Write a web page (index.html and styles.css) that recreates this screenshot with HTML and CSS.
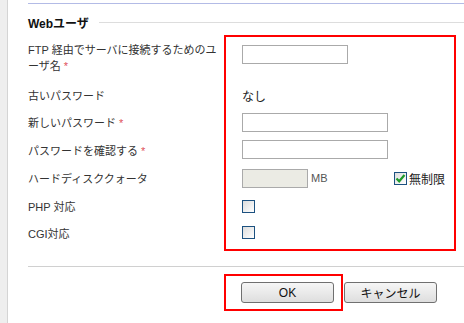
FILE: index.html
```html
<!DOCTYPE html>
<html lang="ja">
<head>
    <meta charset="UTF-8">
    <meta name="viewport" content="width=device-width, initial-scale=1.0">
    <title>Webユーザ</title>
    <link rel="stylesheet" href="styles.css">
</head>
<body>
    <div class="page">
        <div class="rail"></div>
        <div class="main">
            <div class="section-title">
                <span>Webユーザ</span>
            </div>
            <div class="form">
                <div class="labels">
                    <div class="row r1 label-ftp">FTP 経由でサーバに接続するためのユ<br>ーザ名 <em>*</em></div>
                    <div class="row r2"><span>古いパスワード</span></div>
                    <div class="row r3"><span>新しいパスワード <em>*</em></span></div>
                    <div class="row r4"><span>パスワードを確認する <em>*</em></span></div>
                    <div class="row r5"><span>ハードディスククォータ</span></div>
                    <div class="row r6"><span>PHP 対応</span></div>
                    <div class="row r7"><span>CGI対応</span></div>
                </div>
                <div class="fields">
                    <div class="row r1 top"><input class="text short" type="text"></div>
                    <div class="row r2 value">なし</div>
                    <div class="row r3"><input class="text" type="password"></div>
                    <div class="row r4"><input class="text" type="password"></div>
                    <div class="row r5 quota">
                        <input class="text tiny" type="text" disabled>
                        <span class="unit">MB</span>
                        <span class="unlimited">
                            <span class="cb checked">
                                <svg width="11" height="11" viewBox="0 0 11 11"><path d="M1.5 5.5 L4.2 8.3 L9.5 2" fill="none" stroke="#1e9a2a" stroke-width="2.2"/></svg>
                            </span>
                            無制限
                        </span>
                    </div>
                    <div class="row r6"><span class="cb"></span></div>
                    <div class="row r7"><span class="cb"></span></div>
                </div>
            </div>
            <div class="divider"></div>
            <div class="actions">
                <div class="focus"><button class="btn">OK</button></div>
                <button class="btn">キャンセル</button>
            </div>
        </div>
    </div>
</body>
</html>
```

FILE: styles.css
```css
body {
    margin: 0;
    padding: 0;
    background: #ffffff;
    font-family: "Liberation Sans", "Noto Sans CJK JP", sans-serif;
    font-size: 11px;
    color: #333333;
}
.page { display: flex; min-height: 323px; }
.rail { width: 7px; flex: none; background: #eeeeee; border-right: 1px solid #d4d4d4; }
.main { flex: 1; padding-left: 20px; padding-top: 3px; }

.section-title {
    border-top: 1px solid #b3bbe6;
    height: 26px;
    padding-top: 5px;
    display: flex;
    align-items: center;
    font-size: 12px;
    font-weight: bold;
    color: #111111;
}
.section-title::after {
    content: "";
    flex: 1;
    height: 1px;
    background: #dddddd;
    margin-left: 10px;
}

.form { display: flex; }
.labels { width: 196px; flex: none; padding-top: 2px; }
.fields {
    width: 232px;
    flex: none;
    box-sizing: border-box;
    border: 2px solid #ff0000;
    padding: 0 9px 3px 16px;
}
.row { display: flex; align-items: center; }
.r1 { height: 45px; align-items: flex-start; }
.r2 { height: 26px; }
.r3 { height: 28px; }
.r4 { height: 27px; }
.r5 { height: 30px; }
.r6 { height: 26px; }
.r7 { height: 27px; }
.label-ftp { display: block; line-height: 16px; padding-top: 5px; box-sizing: border-box; }
.fields .top { padding-top: 8px; box-sizing: border-box; }
.value { font-size: 12px; color: #222222; }
em { font-style: normal; color: #e0505a; }

.text {
    box-sizing: border-box;
    height: 19px;
    width: 146px;
    margin: 0;
    border: 1px solid #aaaaaa;
    background: #ffffff;
    padding: 1px 3px;
    font: inherit;
}
.text.short { width: 106px; }
.text.tiny { width: 66px; background: #ebebe4; }
.unit { margin-left: 3px; color: #555555; }
.unlimited { margin-left: auto; display: flex; align-items: center; gap: 2px; font-size: 12px; color: #222222; }

.cb {
    width: 13px;
    height: 13px;
    box-sizing: border-box;
    border: 1px solid #1c5180;
    background: linear-gradient(135deg, #dcdcdc, #ffffff);
    display: inline-flex;
    align-items: center;
    justify-content: center;
}

.divider { height: 1px; background: #d0d0d0; margin-top: 15px; }

.actions { display: flex; align-items: flex-start; padding-left: 196px; margin-top: 7px; }
.focus { border: 2px solid #ff0000; padding: 6px 7px 6px 15px; }
.btn {
    width: 93px;
    height: 21px;
    margin: 0;
    padding: 0;
    border: 1px solid #707070;
    border-radius: 3px;
    background: linear-gradient(#f6f6f6, #dedede);
    font-family: "Liberation Sans", "Noto Sans CJK JP", sans-serif;
    font-size: 12px;
    color: #111111;
}
.actions > .btn { margin-top: 8px; margin-left: 1px; }
```
